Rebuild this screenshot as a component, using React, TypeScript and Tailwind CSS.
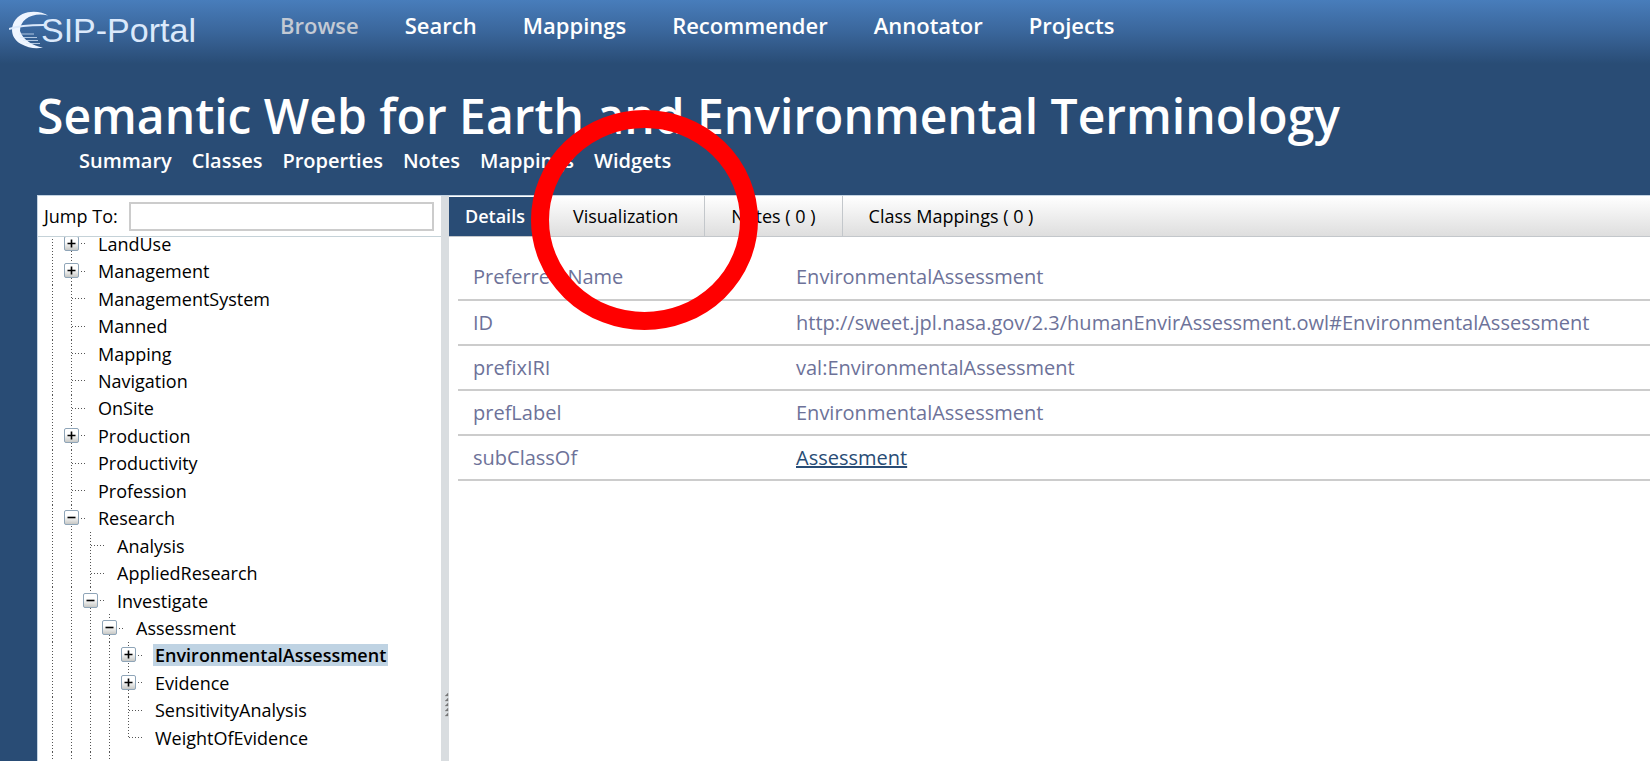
import React from "react";

type TreeNode = { label: string; depth: number; kind: "plus" | "minus" | "leaf"; last?: boolean; current?: boolean };

const nodes: TreeNode[] = [
  { label: "LandUse", depth: 1, kind: "plus" },
  { label: "Management", depth: 1, kind: "plus" },
  { label: "ManagementSystem", depth: 1, kind: "leaf" },
  { label: "Manned", depth: 1, kind: "leaf" },
  { label: "Mapping", depth: 1, kind: "leaf" },
  { label: "Navigation", depth: 1, kind: "leaf" },
  { label: "OnSite", depth: 1, kind: "leaf" },
  { label: "Production", depth: 1, kind: "plus" },
  { label: "Productivity", depth: 1, kind: "leaf" },
  { label: "Profession", depth: 1, kind: "leaf" },
  { label: "Research", depth: 1, kind: "minus" },
  { label: "Analysis", depth: 2, kind: "leaf" },
  { label: "AppliedResearch", depth: 2, kind: "leaf" },
  { label: "Investigate", depth: 2, kind: "minus" },
  { label: "Assessment", depth: 3, kind: "minus" },
  { label: "EnvironmentalAssessment", depth: 4, kind: "plus", current: true },
  { label: "Evidence", depth: 4, kind: "plus" },
  { label: "SensitivityAnalysis", depth: 4, kind: "leaf" },
  { label: "WeightOfEvidence", depth: 4, kind: "leaf", last: true },
];

const navItems = ["Search", "Mappings", "Recommender", "Annotator", "Projects"];
const subNav = ["Summary", "Classes", "Properties", "Notes", "Mappings", "Widgets"];

const details: { name: string; value: string; link?: boolean }[] = [
  { name: "Preferred Name", value: "EnvironmentalAssessment" },
  { name: "ID", value: "http://sweet.jpl.nasa.gov/2.3/humanEnvirAssessment.owl#EnvironmentalAssessment" },
  { name: "prefixIRI", value: "val:EnvironmentalAssessment" },
  { name: "prefLabel", value: "EnvironmentalAssessment" },
  { name: "subClassOf", value: "Assessment", link: true },
];

const dotsY = "w-px bg-[repeating-linear-gradient(to_bottom,#555_0,#555_1px,transparent_1px,transparent_3px)]";
const dotsX = "h-px bg-[repeating-linear-gradient(to_right,#555_0,#555_1px,transparent_1px,transparent_3px)]";

function Guides({ count }: { count: number }) {
  return (
    <>
      {Array.from({ length: count }, (_, i) => (
        <span key={i} className="flex w-[19px] shrink-0 self-stretch">
          <span className={dotsY} />
        </span>
      ))}
    </>
  );
}

function Toggle({ open }: { open: boolean }) {
  return (
    <button type="button" aria-label={open ? "Collapse" : "Expand"} className="absolute top-1/2 -left-[7px] -mt-2">
      <svg width="15" height="15" viewBox="0 0 15 15" className="block">
        <defs>
          <linearGradient id="knob" x1="0" y1="0" x2="0" y2="1">
            <stop offset="0.4" stopColor="#fff" />
            <stop offset="1" stopColor="#c4c5c2" />
          </linearGradient>
        </defs>
        <rect x="0.5" y="0.5" width="14" height="14" rx="1.5" fill="url(#knob)" stroke="#8fa5b8" />
        <path d={open ? "M3.5 7.5h8" : "M3.5 7.5h8M7.5 3.5v8"} stroke="#000" strokeWidth="1.6" />
      </svg>
    </button>
  );
}

function TreeRow({ node }: { node: TreeNode }) {
  return (
    <li className="flex min-h-0 items-center">
      <Guides count={node.depth} />
      <span className="relative flex w-[25px] shrink-0 items-center self-stretch">
        <span className={`${dotsY} ${node.last ? "h-1/2 self-start" : "self-stretch"}`} />
        <span className={`${dotsX} w-[14px]`} />
        {node.kind !== "leaf" && <Toggle open={node.kind === "minus"} />}
      </span>
      <a
        href="#"
        className={`px-[2px] text-[18px] leading-[22px] whitespace-nowrap ${node.current ? "bg-[#bfd3e3] font-semibold" : ""}`}
      >
        {node.label}
      </a>
    </li>
  );
}

function Logo() {
  return (
    <a href="#" aria-label="ESIP-Portal" className="flex h-[40px] w-[200px] shrink-0 items-center text-[#dbe9fb]">
      <svg width="40" height="38" viewBox="0 0 40 38" className="shrink-0" fill="none" stroke="currentColor">
        <path
          d="M39 4.500C31 -1 12 -2 5 11C1 19 3 28 12 33C19 37 27 38 34 36.500C24 35 14 29 11 20C11 8 24 1 39 4.500Z"
          fill="#eef5ff"
          stroke="none"
        />
        <path d="M0 18C8 15 22 14 35 14" strokeWidth="2" />
        <path d="M10 23h15M11 26.500h17M14 29.500h15M17 32.500h14" strokeWidth="1" opacity="0.75" />
      </svg>
      <span className="-ml-2 font-['Liberation_Sans',sans-serif] text-[34px] leading-none whitespace-nowrap">SIP-Portal</span>
    </a>
  );
}

export default function App() {
  return (
    <div className="relative flex h-screen flex-col overflow-hidden bg-[#294c75] font-['Open_Sans',sans-serif] text-black">
      <header className="flex h-[64px] shrink-0 items-start bg-linear-to-b from-[#487dbb] via-[#3a669b] to-[#294c75] pt-[10px] pl-[9px]">
        <Logo />
        <nav className="flex gap-[46px] pl-[71px] text-[22px] leading-[30px] font-semibold text-white">
          <a href="#" className="text-[#c3cad4]">Browse</a>
          {navItems.map((item) => (
            <a key={item} href="#">{item}</a>
          ))}
        </nav>
      </header>

      <section className="shrink-0 pl-[37px] text-white">
        <h1 className="pt-[21px] text-[48px] leading-[62px] font-semibold whitespace-nowrap">
          Semantic Web for Earth and Environmental Terminology
        </h1>
        <nav className="flex h-[48px] gap-[20px] pl-[42px] text-[20px] leading-[28px] font-semibold">
          {subNav.map((item) => (
            <a key={item} href="#">{item}</a>
          ))}
        </nav>
      </section>

      <main className="ml-[37px] flex min-h-0 flex-1 border-t border-l border-[#c3d3e2] bg-white">
        <aside className="flex w-[403px] shrink-0 flex-col">
          <div className="flex h-[41px] shrink-0 items-center gap-[11px] border-b border-[#c5d2d8] pr-[7px] pl-[6px]">
            <label htmlFor="jump" className="text-[18px] whitespace-nowrap">Jump To:</label>
            <input id="jump" type="text" className="h-[29px] min-w-0 flex-1 border-2 border-[#ccc] bg-white px-1" />
          </div>
          <div className="min-h-0 flex-1 overflow-hidden">
            <ul className="-mt-[7px] grid h-[549px] auto-rows-fr pl-[14px]">
              {nodes.map((node) => (
                <TreeRow key={node.label} node={node} />
              ))}
              <li className="flex" aria-hidden="true">
                <Guides count={4} />
              </li>
            </ul>
          </div>
        </aside>

        <div className="flex w-[8px] shrink-0 items-end justify-end bg-[#d9dde0] pb-[44px]">
          <svg width="5" height="24" viewBox="0 0 5 24">
            <path d="M4 0v3h-3zM4 5v3h-3zM4 10v3h-3zM4 15v3h-3zM4 20v3h-3z" fill="#777" stroke="#777" strokeWidth="0.3" />
          </svg>
        </div>

        <div className="flex min-w-0 flex-1 flex-col">
          <div role="tablist" className="flex h-[41px] shrink-0 border-b border-[#c3c7cb] bg-linear-to-b from-white to-[#dedede] text-[18px]">
            <button role="tab" aria-selected="true" className="mt-px bg-[#294c75] pr-[22px] pl-4 font-semibold text-white">Details</button>
            <button role="tab" aria-selected="false" className="border-r border-[#c3c7cb] px-[26px]">Visualization</button>
            <button role="tab" aria-selected="false" className="border-r border-[#c3c7cb] px-[26px]">Notes ( 0 )</button>
            <button role="tab" aria-selected="false" className="px-[26px]">Class Mappings ( 0 )</button>
          </div>
          <div className="pt-[18px] pl-[9px]">
            <table className="w-full table-fixed border-collapse text-left text-[20px] leading-[28px] text-[#6d7299]">
              <colgroup>
                <col className="w-[323px]" />
                <col />
              </colgroup>
              <tbody>
                {details.map((row) => (
                  <tr key={row.name} className="h-[45px] border-b-2 border-[#ccc]">
                    <th scope="row" className="pl-[15px] font-normal">{row.name}</th>
                    <td className="pl-[15px] whitespace-nowrap">
                      {row.link ? <a href="#" className="text-[#294c75] underline">{row.value}</a> : row.value}
                    </td>
                  </tr>
                ))}
              </tbody>
            </table>
          </div>
        </div>
      </main>

      <svg className="pointer-events-none absolute top-[110px] left-[531px]" width="227" height="220" viewBox="0 0 227 220" aria-hidden="true">
        <ellipse cx="113.500" cy="110" rx="104.500" ry="101" fill="none" stroke="#f00" strokeWidth="18" />
      </svg>
    </div>
  );
}
